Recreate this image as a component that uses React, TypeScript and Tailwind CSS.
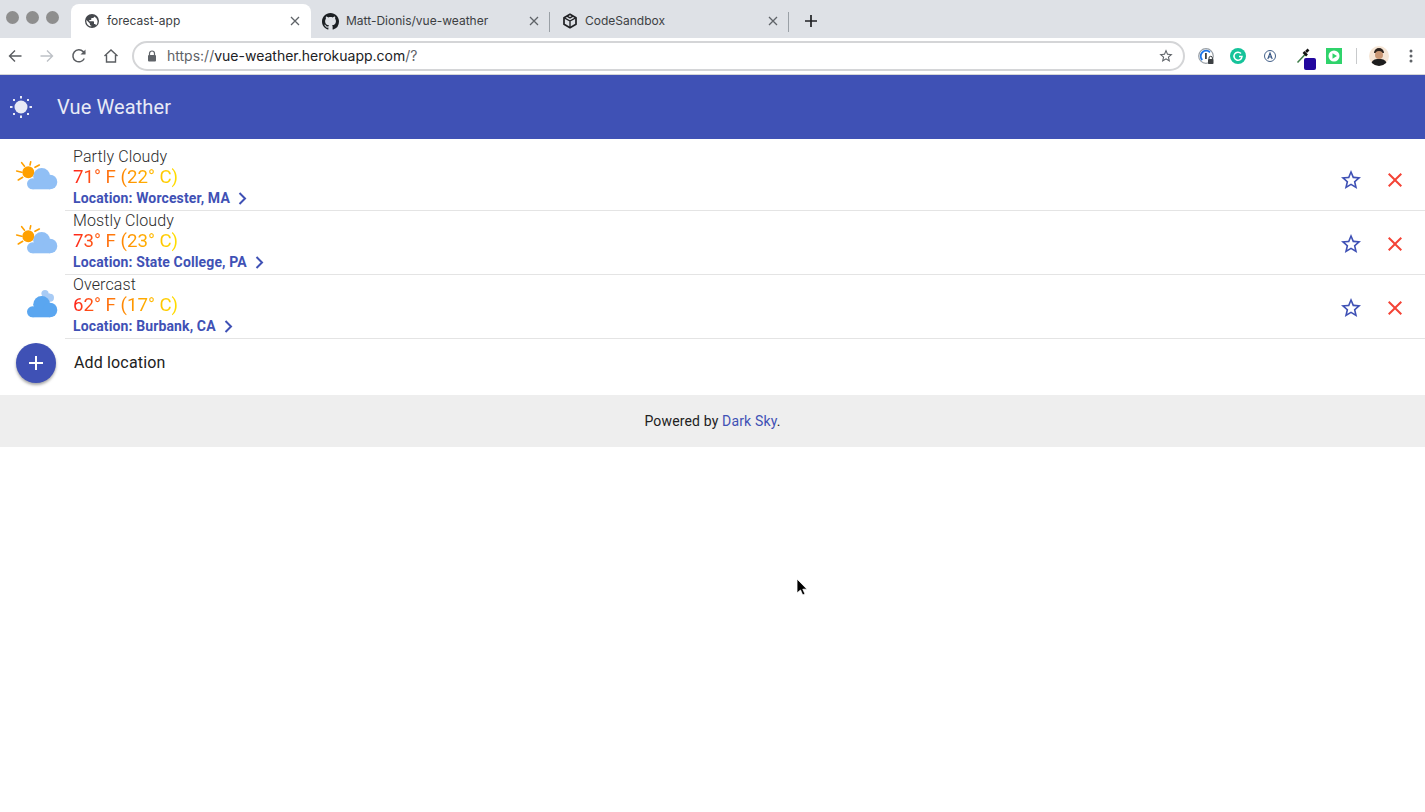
import React from "react";

const Close = ({ className = "" }: { className?: string }) => (
  <svg width="10" height="10" viewBox="0 0 10 10" className={className}>
    <path d="M1 1 9 9M9 1 1 9" stroke="#5f6368" strokeWidth="1.3" fill="none" />
  </svg>
);

const Globe = () => (
  <svg width="16" height="16" viewBox="0 0 24 24">
    <path fill="#45484d" d="M12 1.500a10.500 10.500 0 1 0 0 21 10.500 10.500 0 0 0 0-21zm-1 18.900A8.500 8.500 0 0 1 3.600 10.600L8.800 15.800v1c0 1.100.9 2 2 2zm6.900-2.500c-.3-.8-1-1.400-1.900-1.400h-1v-3c0-.6-.4-1-1-1H8v-2h2c.6 0 1-.4 1-1v-2h2c1.100 0 2-.9 2-2v-.4a8.500 8.500 0 0 1 2.900 13.800z" />
  </svg>
);

const Github = () => (
  <svg width="17" height="17" viewBox="0 0 16 16">
    <path fill="#1b1f23" d="M8 0C3.580 0 0 3.580 0 8c0 3.540 2.290 6.530 5.470 7.590.4.070.55-.17.55-.38 0-.19-.01-.82-.01-1.490-2.010.37-2.530-.49-2.690-.94-.09-.23-.48-.94-.82-1.130-.28-.15-.68-.52-.01-.53.63-.01 1.080.58 1.230.82.720 1.210 1.870.87 2.330.66.070-.52.280-.87.510-1.070-1.780-.2-3.640-.89-3.640-3.950 0-.87.310-1.590.820-2.150-.08-.2-.36-1.020.08-2.120 0 0 .67-.21 2.200.82.640-.18 1.320-.27 2-.27s1.360.09 2 .27c1.530-1.040 2.200-.82 2.200-.82.440 1.100.16 1.920.08 2.120.51.560.82 1.270.82 2.150 0 3.070-1.870 3.750-3.650 3.950.29.250.54.730.54 1.480 0 1.070-.01 1.930-.01 2.200 0 .21.150.46.550.38A8.010 8.010 0 0 0 16 8c0-4.420-3.580-8-8-8z" />
  </svg>
);

const Box = () => (
  <svg width="16" height="16" viewBox="0 0 24 24" fill="none" stroke="#202124" strokeWidth="2.6" strokeLinejoin="round">
    <path d="M12 2 21 7v10l-9 5-9-5V7z" />
    <path d="M3.500 7.300 12 12l8.500-4.700M12 12v9.500M7.500 4.700 12 7.200l4.500-2.500" strokeWidth="2" />
  </svg>
);

const Sun = () => (
  <svg width="24" height="24" viewBox="0 0 24 24" fill="#e8eaf6">
    <circle cx="12" cy="12" r="6.500" />
    <rect x="11" y="1" width="2" height="2.500" />
    <rect x="11" y="20.500" width="2" height="2.500" />
    <rect x="1" y="11" width="2.500" height="2" />
    <rect x="20.500" y="11" width="2.500" height="2" />
    <rect x="4" y="4" width="2" height="2" />
    <rect x="18" y="4" width="2" height="2" />
    <rect x="4" y="18" width="2" height="2" />
    <rect x="18" y="18" width="2" height="2" />
  </svg>
);

const Cloud = ({ color }: { color: string }) => (
  <g fill={color}>
    <circle cx="27.700" cy="15.500" r="8.500" />
    <circle cx="18.500" cy="22.800" r="5.500" />
    <circle cx="36" cy="21" r="7.300" />
    <rect x="18.500" y="20" width="17.500" height="8.300" />
  </g>
);

const SunCloud = () => (
  <svg width="44" height="36" viewBox="0 0 44 36" className="block">
    <g stroke="#ffa000" strokeWidth="1.600" strokeLinecap="round">
      <path d="M16.700.8 16 4M7.700 1.700 10.500 5.200M2.700 10l5 1.300M4.300 19l4.400-2.700M21 6.300l4.300-2.300" />
    </g>
    <circle cx="14.300" cy="11.300" r="6" fill="#ffa000" />
    <Cloud color="#90bff5" />
  </svg>
);

const Overcast = () => (
  <svg width="44" height="36" viewBox="0 0 44 36" className="block">
    <circle cx="31" cy="4.500" r="3.600" fill="#a8cbf5" />
    <circle cx="36" cy="8.700" r="4" fill="#a8cbf5" />
    <rect x="28" y="4.500" width="8" height="8" fill="#a8cbf5" />
    <Cloud color="#5aa6f0" />
  </svg>
);

const Star = () => (
  <svg width="24" height="24" viewBox="0 0 24 24" className="translate-y-[1px]">
    <path
      fill="#3f51b5"
      d="M22 9.240l-7.190-.62L12 2 9.190 8.630 2 9.240l5.460 4.730L5.820 21 12 17.270 18.180 21l-1.630-7.030L22 9.240zM12 15.400l-3.760 2.270 1-4.280-3.320-2.880 4.380-.38L12 6.100l1.710 4.040 4.380.38-3.320 2.880 1 4.280L12 15.400z"
    />
  </svg>
);

const RedX = () => (
  <svg width="24" height="24" viewBox="0 0 24 24" className="translate-y-[1px]">
    <path fill="#f44336" d="M19 6.410 17.590 5 12 10.590 6.410 5 5 6.410 10.590 12 5 17.590 6.410 19 12 13.410 17.590 19 19 17.590 13.410 12z" />
  </svg>
);

const Chevron = () => (
  <svg width="9" height="13" viewBox="0 0 9 13" className="ml-[8px] mt-[1px]">
    <path d="M1.500 1 7 6.500 1.500 12" stroke="#3f51b5" strokeWidth="2" fill="none" />
  </svg>
);

const rows = [
  { title: "Partly Cloudy", f: "71° F", c: "(22° C)", loc: "Location: Worcester, MA", over: false },
  { title: "Mostly Cloudy", f: "73° F", c: "(23° C)", loc: "Location: State College, PA", over: false },
  { title: "Overcast", f: "62° F", c: "(17° C)", loc: "Location: Burbank, CA", over: true },
];

const Tab = ({ icon, label, active, sep }: { icon: React.ReactNode; label: string; active?: boolean; sep?: boolean }) => (
  <div className={`relative flex h-[34px] items-center pr-[11px] ${active ? "w-[240px] rounded-t-[8px] bg-white pl-[12px]" : "w-[239px] pl-[11px]"}`}>
    <span className="flex w-[17px] justify-center">{icon}</span>
    <span className="ml-[7px] flex-1 text-[12px] text-[#3c4043]">{label}</span>
    <Close />
    {sep && <span className="absolute right-[0px] top-[8px] h-[20px] w-px bg-[#9aa0a6]" />}
  </div>
);

export default function App() {
  return (
    <div className="min-h-[812px] bg-white font-['Roboto',sans-serif]">
      <div className="flex h-[38px] items-end bg-[#dee1e6]">
        <div className="flex h-full items-start gap-[7px] pl-[6px] pt-[11px]">
          <span className="h-[13px] w-[13px] rounded-full bg-[#8e8e8e]" />
          <span className="h-[13px] w-[13px] rounded-full bg-[#8e8e8e]" />
          <span className="h-[13px] w-[13px] rounded-full bg-[#8e8e8e]" />
        </div>
        <div className="ml-[12px] flex items-end font-['Inter',sans-serif]">
          <Tab icon={<Globe />} label="forecast-app" active />
          <Tab icon={<Github />} label="Matt-Dionis/vue-weather" sep />
          <Tab icon={<Box />} label="CodeSandbox" sep />
        </div>
        <svg width="14" height="14" viewBox="0 0 14 14" className="mb-[10px] ml-[15px]">
          <path d="M7 1v12M1 7h12" stroke="#202124" strokeWidth="1.700" />
        </svg>
      </div>

      <div className="flex h-[37px] items-center border-b border-[#d4d5d7] bg-white">
        <div className="flex w-[132px] items-center">
          <svg width="14" height="14" viewBox="0 0 14 14" className="ml-[8px]">
            <path d="M13.500 7H1.500M7 1.500 1.500 7 7 12.500" stroke="#5a5d61" strokeWidth="1.400" fill="none" />
          </svg>
          <svg width="14" height="14" viewBox="0 0 14 14" className="ml-[18px]">
            <path d="M.5 7h12M7 1.500 12.500 7 7 12.500" stroke="#bdc1c6" strokeWidth="1.400" fill="none" />
          </svg>
          <svg width="16" height="16" viewBox="0 0 16 16" className="ml-[17px]">
            <path d="M13.300 10.500A6 6 0 1 1 12.200 3.600L14 5.500" stroke="#5a5d61" strokeWidth="1.500" fill="none" />
            <path d="M14.500 1.500V6.500H9.500z" fill="#5a5d61" />
          </svg>
          <svg width="16" height="16" viewBox="0 0 16 16" className="ml-[16px]">
            <path d="M1.500 8 8 2l6.500 6M3.500 7v7h9V7" stroke="#5a5d61" strokeWidth="1.400" fill="none" />
          </svg>
        </div>
        <div className="flex h-[30px] w-[1053px] items-center rounded-full border-2 border-[#d4d5d7] pl-[13px] pr-[9px] font-['Inter',sans-serif]">
          <svg width="10" height="12" viewBox="0 0 10 12">
            <path d="M2.500 5V3.500a2.500 2.500 0 0 1 5 0V5" stroke="#5f6368" strokeWidth="1.200" fill="none" />
            <rect x="1" y="5" width="8" height="6.500" rx="1" fill="#5f6368" />
          </svg>
          <span className="ml-[10px] flex-1 -translate-y-[1px] text-[14px] text-[#5f6368]">
            https://<span className="text-[#202124]">vue-weather.herokuapp.com</span>/?
          </span>
          <svg width="16" height="16" viewBox="0 0 24 24">
            <path
              fill="#5f6368"
              d="M22 9.240l-7.190-.62L12 2 9.190 8.630 2 9.240l5.460 4.730L5.820 21 12 17.270 18.180 21l-1.630-7.030L22 9.240zM12 15.400l-3.760 2.270 1-4.280-3.320-2.880 4.380-.38L12 6.100l1.710 4.040 4.380.38-3.320 2.880 1 4.280L12 15.400z"
            />
          </svg>
        </div>
        <div className="flex flex-1 items-center">
          <svg width="17" height="17" viewBox="0 0 17 17" className="ml-[13px]">
            <circle cx="8" cy="8" r="7.300" fill="none" stroke="#9aa0a6" strokeWidth="1.200" />
            <path d="M4.300 12A5.200 5.200 0 1 1 12 4.300" fill="none" stroke="#1a73e8" strokeWidth="1.800" />
            <rect x="7" y="5" width="1.800" height="6" fill="#3c4043" />
            <path d="M11 11V10a1.700 1.700 0 0 1 3.400 0v1" stroke="#3c4043" strokeWidth="1" fill="none" />
            <rect x="10" y="11" width="5.500" height="5" rx="0.800" fill="#3c4043" />
          </svg>
          <svg width="16" height="16" viewBox="0 0 16 16" className="ml-[15px]">
            <circle cx="8" cy="8" r="8" fill="#15c39a" />
            <path d="M11 5.500A4 4 0 1 0 12 8.500H9" stroke="#fff" strokeWidth="1.500" fill="none" />
          </svg>
          <svg width="16" height="16" viewBox="0 0 16 16" className="ml-[16px]">
            <circle cx="8" cy="8" r="5.500" fill="none" stroke="#44618a" strokeWidth="1" />
            <path d="M5.800 11 8 5l2.200 6M6.500 9h3" stroke="#2f4f7f" strokeWidth="1.100" fill="none" />
          </svg>
          <div className="relative ml-[18px] h-[20px] w-[20px]">
            <svg width="14" height="16" viewBox="0 0 14 16" className="absolute left-0 top-[2px]">
              <path d="M1.500 14.500 9 6.500" stroke="#3e7d4a" strokeWidth="1.600" />
              <path d="M7.500 4l3.500 3.500" stroke="#111" strokeWidth="2.600" />
              <path d="M10 4l2.500-2.500" stroke="#111" strokeWidth="2.600" />
            </svg>
            <span className="absolute left-[8px] top-[12px] h-[12px] w-[12px] rounded-[2px] bg-[#22079e]" />
          </div>
          <svg width="16" height="16" viewBox="0 0 16 16" className="ml-[10px]">
            <rect width="16" height="16" fill="#2fd36b" />
            <circle cx="8" cy="8" r="5.500" fill="#fff" />
            <path d="M6.500 5.200 11 8l-4.500 2.800z" fill="#2fd36b" />
          </svg>
          <span className="ml-[14px] h-[16px] w-px bg-[#c8cacc]" />
          <div className="relative ml-[12px] h-[20px] w-[20px] overflow-hidden rounded-full bg-[#f5e5d5]">
            <span className="absolute left-[5px] top-[2px] h-[5px] w-[10px] rounded-t-full bg-[#2a211c]" />
            <span className="absolute left-[6px] top-[5px] h-[8px] w-[8px] rounded-full bg-[#c99774]" />
            <span className="absolute left-[2px] top-[13px] h-[10px] w-[16px] rounded-t-[6px] bg-[#1d1d1d]" />
          </div>
          <svg width="4" height="14" viewBox="0 0 4 14" className="ml-[20px]">
            <circle cx="2" cy="2" r="1.500" fill="#5f6368" />
            <circle cx="2" cy="7" r="1.500" fill="#5f6368" />
            <circle cx="2" cy="12" r="1.500" fill="#5f6368" />
          </svg>
        </div>
      </div>

      <header className="flex h-[64px] items-center bg-[#3f51b5] pl-[9px]">
        <Sun />
        <h1 className="ml-[24px] text-[20px] font-normal tracking-[0.1px] text-[#e8eaf6]">Vue Weather</h1>
      </header>

      <ul className="pt-[8px]">
        {rows.map((r) => (
          <li key={r.title} className="flex h-[64px] items-center">
            <div className="flex h-full w-[65px] items-center justify-end pr-[7px]">
              {r.over ? <Overcast /> : <SunCloud />}
            </div>
            <div className="flex h-full flex-1 items-center border-b border-[#e4e4e4] pl-[8px] pr-[18px]">
              <div className="flex-1 -translate-y-[2px]">
                <div className="text-[16px] font-light leading-[20px] tracking-[0.12px] text-[#2b2b2b]">{r.title}</div>
                <div className="-mt-[1px] text-[18.7px] font-normal leading-[22px]">
                  <span className="inline-block bg-gradient-to-r from-[#ff1a1a] via-[#ff8c00] to-[#ffe000] bg-clip-text text-transparent">
                    {r.f} {r.c}
                  </span>
                </div>
                <div className="mt-[1px] flex items-center text-[14px] font-bold leading-[18px] tracking-[0.13px] text-[#3f51b5]">
                  {r.loc}
                  <Chevron />
                </div>
              </div>
              <Star />
              <span className="ml-[20px]">
                <RedX />
              </span>
            </div>
          </li>
        ))}
      </ul>

      <div className="flex h-[56px] items-center pl-[16px]">
        <button className="flex h-[40px] w-[40px] -translate-y-[4px] items-center justify-center rounded-full bg-[#3f51b5] shadow-[0_2px_3px_rgba(0,0,0,0.35)]">
          <svg width="14" height="14" viewBox="0 0 14 14">
            <path d="M7 0v14M0 7h14" stroke="#fff" strokeWidth="2" />
          </svg>
        </button>
        <span className="ml-[18px] -translate-y-[4px] text-[16px] tracking-[0.15px] text-[#212121]">Add location</span>
      </div>

      <footer className="flex h-[52px] items-center justify-center bg-[#eeeeee] text-[14px] tracking-[0.15px] text-[#212121]">
        <span>
          Powered by <a className="text-[#3f51b5]">Dark Sky</a>.
        </span>
      </footer>

      <svg width="14" height="20" viewBox="0 0 14 20" className="absolute left-[796px] top-[578px]">
        <path d="M1 1v14l3.500-3 2.200 5 2.300-1-2.200-4.800H11z" fill="#000" stroke="#fff" strokeWidth="0.800" />
      </svg>
    </div>
  );
}
